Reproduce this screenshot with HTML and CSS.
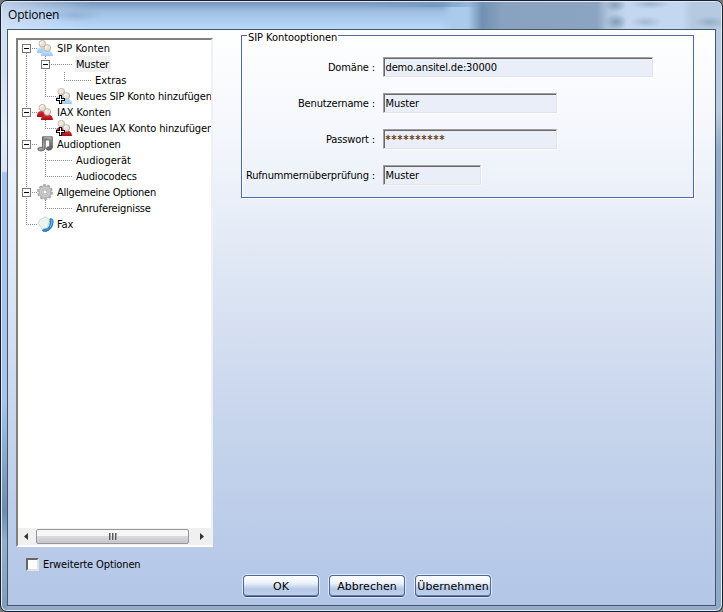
FILE: index.html
```html
<!DOCTYPE html>
<html lang="de">
<head>
<meta charset="utf-8">
<title>Optionen</title>
<link rel="stylesheet" href="styles.css">
</head>
<body>
<svg class="defs" width="0" height="0">
  <defs>
    <linearGradient id="skin" x1="0" y1="0" x2="1" y2="1"><stop offset="0" stop-color="#fffdf6"/><stop offset="1" stop-color="#ddd0c0"/></linearGradient>
    <linearGradient id="blue" x1="0" y1="0" x2="0" y2="1"><stop offset="0" stop-color="#c8e2fa"/><stop offset="1" stop-color="#98c6f2"/></linearGradient>
    <linearGradient id="red" x1="0" y1="0" x2="0" y2="1"><stop offset="0" stop-color="#dc3038"/><stop offset="1" stop-color="#a80d18"/></linearGradient>
    <linearGradient id="metal" x1="0" y1="0" x2="1" y2="1"><stop offset="0" stop-color="#4a4a4a"/><stop offset=".5" stop-color="#a8a8a8"/><stop offset="1" stop-color="#444"/></linearGradient>
    <symbol id="people" viewBox="0 0 16 16">
      <path d="M0 12Q0 7 5 7L10 9 8 13H0Z"/>
      <circle cx="5.300" cy="3.700" r="3.300" fill="url(#skin)" stroke="#a89d90" stroke-width=".7"/>
      <path d="M4 16Q4 11 9 10.500H12Q15.800 11.500 16 16Z"/>
      <circle cx="10.300" cy="8" r="3.400" fill="url(#skin)" stroke="#a89d90" stroke-width=".7"/>
    </symbol>
    <symbol id="plus" viewBox="0 0 9 9"><path d="M3 0H6V3H9V6H6V9H3V6H0V3H3Z" fill="#000"/><path d="M4 1H5V4H8V5H5V8H4V5H1V4H4Z" fill="#fff"/></symbol>
    <symbol id="box" viewBox="0 0 9 9"><rect x=".5" y=".5" width="8" height="8" fill="#fff" stroke="#777"/><path d="M2 4.500H7" stroke="#000"/></symbol>
    <symbol id="note" viewBox="0 0 16 16">
      <path d="M5.500 .8H15.300V12Q14.500 14.300 11.500 14.300 8.800 14 9.300 12 10.300 10.300 12.700 10.800V4H8.300V12.700Q7 15 3.500 15 .4 14.600 .8 12.600 2 10.800 5.500 11.300Z" fill="url(#metal)" stroke="#444" stroke-width=".7"/>
      <path d="M6.500 1.800H14.300" fill="none" stroke="#c4c4c4" stroke-width=".8"/>
    </symbol>
    <symbol id="gear" viewBox="0 0 16 16">
      <circle cx="8" cy="8" r="6.800" fill="none" stroke="#a4a4a4" stroke-width="2.200" stroke-dasharray="2.700 1.573"/>
      <circle cx="8" cy="8" r="4.700" fill="none" stroke="#b4b4b4" stroke-width="4"/>
      <circle cx="8" cy="8" r="4.400" fill="none" stroke="#cfcfcf" stroke-width="1.500"/>
      <circle cx="8" cy="8" r="2.100" fill="#fff" stroke="#8d8d8d" stroke-width=".8"/>
    </symbol>
    <symbol id="fax" viewBox="0 0 16 16">
      <path d="M12.500 2.500Q15.500 2 15.800 5 16 13 8.500 15.700 5 16.200 4.500 14L7.500 12.500 9.500 12.700Q12.300 10.500 12.600 7L11.500 5Z" fill="#3188c5" stroke="#1b659f" stroke-width=".5"/>
      <path d="M14.300 4Q15 8 12.700 11" fill="none" stroke="#7cc1ea"/>
      <path d="M.6 6.500 3.500 2.500 5 3 6.500 .8 9.500 1.800 12 4 10 11.500 4.500 13.300Z" fill="#eaf4f3" stroke="#b4cbcc" stroke-width=".7"/>
    </symbol>
  </defs>
</svg>
<div class="window">
  <header class="titlebar"><span class="title">Optionen</span></header>
  <main class="client">
    <div class="columns">
      <aside class="sidebar">
        <div class="tree">
          <div class="rows">
            <div class="row"><svg width="39" height="16"><path class="dot" d="M8.500 9V16M27.500 15V16M14 8.500H20"/><use href="#box" x="4" y="4" width="9" height="9"/><use href="#people" class="blue" x="19" y="0" width="16" height="16"/></svg><span>SIP Konten</span></div>
            <div class="row"><svg width="58" height="16"><path class="dot" d="M8.500 0V16M27.500 0V16M33 8.500H54"/><use href="#box" x="23" y="4" width="9" height="9"/></svg><span class="selected">Muster</span></div>
            <div class="row"><svg width="77" height="16"><path class="dot" d="M8.500 0V16M27.500 0V16M46.500 0V8M46 8.500H73"/></svg><span>Extras</span></div>
            <div class="row"><svg width="58" height="16"><path class="dot" d="M8.500 0V16M27.500 0V8M27 8.500H39"/><use href="#people" class="blue" x="38" y="0" width="16" height="16"/><use href="#plus" x="38" y="7" width="9" height="9"/></svg><span>Neues SIP Konto hinzufügen</span></div>
            <div class="row"><svg width="39" height="16"><path class="dot" d="M8.500 0V16M27.500 15V16M14 8.500H20"/><use href="#box" x="4" y="4" width="9" height="9"/><use href="#people" class="red" x="19" y="0" width="16" height="16"/></svg><span>IAX Konten</span></div>
            <div class="row"><svg width="58" height="16"><path class="dot" d="M8.500 0V16M27.500 0V8M27 8.500H39"/><use href="#people" class="red" x="38" y="0" width="16" height="16"/><use href="#plus" x="38" y="7" width="9" height="9"/></svg><span>Neues IAX Konto hinzufügen</span></div>
            <div class="row"><svg width="39" height="16"><path class="dot" d="M8.500 0V16M14 8.500H20"/><use href="#box" x="4" y="4" width="9" height="9"/><use href="#note" x="19" y="0" width="16" height="16"/></svg><span>Audioptionen</span></div>
            <div class="row"><svg width="58" height="16"><path class="dot" d="M8.500 0V16M27.500 0V16M27 8.500H54"/></svg><span>Audiogerät</span></div>
            <div class="row"><svg width="58" height="16"><path class="dot" d="M8.500 0V16M27.500 0V8M27 8.500H54"/></svg><span>Audiocodecs</span></div>
            <div class="row"><svg width="39" height="16"><path class="dot" d="M8.500 0V16M14 8.500H20"/><use href="#box" x="4" y="4" width="9" height="9"/><use href="#gear" x="19" y="0" width="16" height="16"/></svg><span>Allgemeine Optionen</span></div>
            <div class="row"><svg width="58" height="16"><path class="dot" d="M8.500 0V16M27.500 0V8M27 8.500H54"/></svg><span>Anrufereignisse</span></div>
            <div class="row"><svg width="39" height="16"><path class="dot" d="M8.500 0V8M8 8.500H20"/><use href="#fax" x="19" y="0" width="17" height="16"/></svg><span>Fax</span></div>
          </div>
          <div class="scrollbar">
            <svg width="18" height="17"><path d="M10 5V12L6 8.500Z" fill="#333"/></svg>
            <div class="thumb"><i></i><i></i><i></i></div>
            <svg width="22" height="17"><path d="M11 5V12L15 8.500Z" fill="#333"/></svg>
          </div>
        </div>
        <label class="advanced"><span class="check"></span><span>Erweiterte Optionen</span></label>
      </aside>
      <section class="group">
        <h2>SIP Kontooptionen</h2>
        <div class="field"><span class="label">Domäne :</span><span class="input wide">demo.ansitel.de:30000</span></div>
        <div class="field"><span class="label">Benutzername :</span><span class="input">Muster</span></div>
        <div class="field"><span class="label">Passwort :</span><span class="input secret">**********</span></div>
        <div class="field"><span class="label">Rufnummernüberprüfung :</span><span class="input narrow">Muster</span></div>
      </section>
    </div>
    <footer class="actions"><button>OK</button><button>Abbrechen</button><button>Übernehmen</button></footer>
  </main>
</div>
</body>
</html>
```
FILE: styles.css
```css
* { box-sizing: border-box; }
body {
  margin: 0;
  background: #777;
  font: 11px/16px "DejaVu Sans Condensed", "DejaVu Sans", sans-serif;
  font-stretch: condensed;
  letter-spacing: -.28px;
  color: #000;
}
.defs { display: block; position: absolute; }
.window {
  width: 723px;
  height: 612px;
  padding: 0 5px 4px;
  border: 1px solid #1c1f2b;
  border-radius: 7px;
  box-shadow: inset 0 0 0 1px #dceafa;
  background:
    linear-gradient(#d4e1f1 0 70px, #e3ebf7 130px, #dbe5f3 170px, #a5c5ec 172px, #a5c5ec 400px, #6d8dad 510px, #93aecb 540px, #829bb8) 0 0 / 6px 100% no-repeat,
    linear-gradient(#b9cde2 0, #b9cde2 110px, #91abc8 150px, #98b0cc 400px, #8ea9c7) 100% 0 / 7px 100% no-repeat,
    #91abc8;
}
.titlebar {
  height: 27px;
  margin: 1px -4px 0;
  padding: 4px 0 0 6px;
  border-radius: 5px 5px 0 0;
  background:
    radial-gradient(ellipse 11px 8px at 614px 20px, #849db8, transparent) no-repeat,
    radial-gradient(ellipse 16px 6px at 644px 20px, #a4bad3, transparent) no-repeat,
    radial-gradient(ellipse 16px 6px at 708px 20px, #98afc8, transparent) no-repeat,
    radial-gradient(ellipse 11px 7px at 613px 3px, #8aa2bd, transparent) no-repeat,
    radial-gradient(ellipse 20px 5px at 648px 2px, #9fb5ce, transparent) no-repeat,
    linear-gradient(90deg, transparent 360px, #789ac2 430px, transparent 490px) 0 0 / 100% 5px no-repeat,
    linear-gradient(90deg, transparent 440px, #abcbed 450px 466px, #7190b2 480px, #88a2bf 500px, #8aa4c1 595px, #afc4dd 606px, #c3d8f0 626px 680px, #b5cae0 690px),
    linear-gradient(90deg, rgba(220,232,247,.65), transparent 90px),
    linear-gradient(#7896bc, #a0c0e4 10px, #b7d8fb);
}
.title {
  font: 12px/18px "Open Sans", "Noto Sans", sans-serif;
  letter-spacing: -.17px;
  padding-right: 45px;
  background: radial-gradient(ellipse 28px 7px at 66px 9px, #7e9dc480 0, transparent);
}
.client {
  height: 577px;
  width: 709px;
  margin-left: 1px;
  border: 1px solid #44566c;
  background: linear-gradient(#fff, #f3f6fc 110px, #e7edf7 190px, #cad7ed 370px, #b3c6e7);
}
.columns { display: flex; height: 545px; }
.sidebar { width: 197px; margin: 8px 0 0 8px; }
.tree {
  width: 197px;
  height: 509px;
  border: 2px solid;
  border-color: #82807d #eef0f3 #fff #82807d;
  background: #fff;
  display: flex;
  flex-direction: column;
  overflow: hidden;
}
.rows { flex: 1; letter-spacing: -.17px; }
.row { display: flex; height: 16px; white-space: nowrap; }
.row svg { display: block; flex: none; }
.row > span { line-height: 17px; height: 16px; }
.row:nth-child(1) span, .row:nth-child(10) span { letter-spacing: -.27px; }
.row:nth-child(1) span { letter-spacing: .02px; }
.row:nth-child(5) span { letter-spacing: 0; }
.row:nth-child(3) span, .row:nth-child(8) span { letter-spacing: .05px; }
.row:nth-child(4) span, .row:nth-child(6) span { letter-spacing: -.12px; }
.dot { fill: none; stroke: #888; stroke-dasharray: 1 1; }
.blue { fill: url(#blue); }
.red { fill: url(#red); }
.selected { background: #f0f0f0; margin-left: -1px; padding: 0 2px 0 1px; }
.scrollbar { display: flex; height: 17px; background: #f0f0f0; }
.thumb {
  display: flex;
  flex: 1;
  justify-content: center;
  align-items: center;
  gap: 1px;
  height: 15px;
  margin-top: 1px;
  border: 1px solid #979797;
  border-radius: 2px;
  background: linear-gradient(#f6f6f6 0 45%, #dadade 50%, #c6c6cb);
}
.thumb i { width: 2px; height: 7px; background: linear-gradient(90deg, #555 1px, #aaa 1px); }
.advanced { display: flex; gap: 4px; margin: 9px 0 0 10px; align-items: center; letter-spacing: -.12px; }
.advanced span:last-child { line-height: 18px; height: 16px; }
.check { width: 13px; height: 13px; border: 2px solid; border-color: #666 #e3e3e3 #e3e3e3 #666; background: #fff; margin-top: 1px; }
.group {
  width: 453px;
  height: 163px;
  margin: 5px 0 0 28px;
  border: 1px solid #4d69a8;
  box-shadow: 1px 1px #fff, inset 1px 1px #fff;
}
h2 {
  width: 91px;
  height: 13px;
  margin: -5px 0 13px 5px;
  padding: 0 1px;
  background: #fefefe;
  font-size: 11px;
  line-height: 13px;
  font-weight: 400;
  letter-spacing: -.05px;
  white-space: nowrap;
}
.field { display: flex; height: 20px; margin-bottom: 16px; align-items: center; }
.label { width: 133px; height: 20px; margin-right: 8px; text-align: right; white-space: nowrap; line-height: 21px; letter-spacing: -.14px; }
.input {
  width: 174px;
  height: 20px;
  border: 1px solid;
  border-color: #a0a0a0 #e2e3e6 #e2e3e6 #a0a0a0;
  box-shadow: inset 1px 1px #696969, 1px 1px #fff8;
  background: #e9eef8;
  line-height: 19px;
  padding-left: 1.5px;
  letter-spacing: -.08px;
}
.wide { width: 270px; letter-spacing: -.14px; }
.narrow { width: 98px; }
.secret { letter-spacing: 1.05px; color: #6b3c12; -webkit-text-stroke: .3px #6b3c12; }
.actions { display: flex; gap: 10px; padding-left: 235px; }
button {
  width: 76px;
  height: 22px;
  padding: 0;
  border: 1px solid #4c679b;
  border-bottom-color: #304779;
  border-radius: 4px;
  box-shadow: 0 0 0 1px #e1e9f5, inset 0 -1px #6680ad;
  background: linear-gradient(#fff, #edf2fa 35%, #b4c8e6 65%, #c1d1ea);
  font: 11px/22px "DejaVu Sans", sans-serif;
  color: #000;
  white-space: nowrap;
}
```
